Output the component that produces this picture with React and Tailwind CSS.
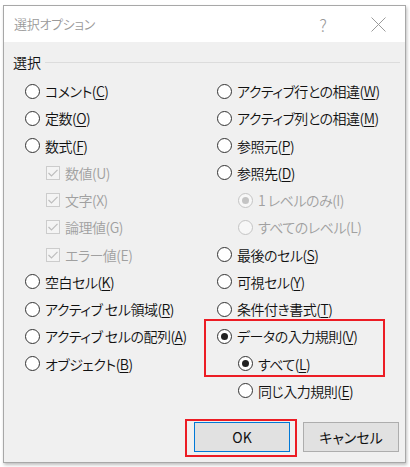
const FONT = { fontFamily: '"Noto Sans CJK JP", "Noto Sans", sans-serif' };

function Radio({ checked, disabled }) {
  return (
    <span
      className={
        'flex w-[15px] h-[15px] shrink-0 items-center justify-center rounded-full border ' +
        (disabled ? 'border-[#c4c4c4] bg-[#f7f7f7]' : 'border-[#333333] bg-white')
      }
    >
      {checked && (
        <span className={'w-[7px] h-[7px] rounded-full ' + (disabled ? 'bg-[#c4c4c4]' : 'bg-[#222222]')} />
      )}
    </span>
  );
}

function Check() {
  return (
    <span className="flex w-[14px] h-[14px] shrink-0 items-center justify-center border border-[#cccccc] bg-[#f4f4f4]">
      <svg width="12" height="12" viewBox="0 0 12 12" fill="none" stroke="#bdbdbd" strokeWidth="1.2">
        <path d="M1.5 6 L4.5 9 L10.5 2.8" />
      </svg>
    </span>
  );
}

// one row: control + label with access key underlined
function Option({ label, k, type = 'radio', checked, disabled, indent }) {
  return (
    <div className={'flex h-[27.25px] items-center ' + (indent ? 'pl-[21px]' : '')}>
      {type === 'check' ? <Check /> : <Radio checked={checked} disabled={disabled} />}
      <span
        className={'ml-[5px] text-[14px] font-[350] tracking-[-0.5px] leading-none whitespace-nowrap [font-feature-settings:"palt"] ' + (disabled ? 'text-[#a0a0a0]' : 'text-[#111111]')}
      >
        {label}(<span className={disabled ? '' : 'underline underline-offset-2'}>{k}</span>)
      </span>
    </div>
  );
}

export default function App() {
  return (
    <div className="w-[410px] h-[467px] bg-white pl-[3px] pt-[5px] overflow-hidden" style={FONT}>
      {/* dialog */}
      <div className="relative flex flex-col w-[403px] h-[458px] border border-[#a8a8a8] bg-[#f0f0f0] shadow-[1px_2px_3px_rgba(0,0,0,0.25)]">
        {/* title bar */}
        <div className="flex items-center h-[36px] bg-white pl-[10px] shrink-0">
          <span className="text-[13px] font-[350] tracking-[-0.3px] text-[#9a9a9a] [font-feature-settings:'palt']">選択オプション</span>
          <span className="ml-auto text-[17px] font-light text-[#9a9a9a] leading-none">?</span>
          <svg className="ml-[44px] mr-[19px]" width="15" height="15" viewBox="0 0 15 15" stroke="#9a9a9a" strokeWidth="1">
            <path d="M0.5 0.5 L14.5 14.5 M14.5 0.5 L0.5 14.5" />
          </svg>
        </div>

        {/* group header */}
        <div className="flex items-center h-[20px] mt-[10px] pl-[9px] pr-[5px]">
          <span className="text-[14px] font-[350] text-[#111111]">選択</span>
          <span className="flex-1 h-px bg-[#dcdcdc] ml-[4px]" />
        </div>

        {/* options */}
        <div className="flex mt-[5.4px] pl-[21px]">
          <div className="flex flex-col w-[192px]">
            <Option label="コメント" k="C" />
            <Option label="定数" k="O" />
            <Option label="数式" k="F" />
            <Option label="数値" k="U" type="check" disabled indent />
            <Option label="文字" k="X" type="check" disabled indent />
            <Option label="論理値" k="G" type="check" disabled indent />
            <Option label="エラー値" k="E" type="check" disabled indent />
            <Option label="空白セル" k="K" />
            <Option label="アクティブ セル領域" k="R" />
            <Option label="アクティブ セルの配列" k="A" />
            <Option label="オブジェクト" k="B" />
          </div>
          <div className="flex flex-col">
            <Option label="アクティブ行との相違" k="W" />
            <Option label="アクティブ列との相違" k="M" />
            <Option label="参照元" k="P" />
            <Option label="参照先" k="D" />
            <Option label="1 レベルのみ" k="I" checked disabled indent />
            <Option label="すべてのレベル" k="L" disabled indent />
            <Option label="最後のセル" k="S" />
            <Option label="可視セル" k="Y" />
            <Option label="条件付き書式" k="T" />
            <Option label="データの入力規則" k="V" checked />
            <Option label="すべて" k="L" checked indent />
            <Option label="同じ入力規則" k="E" indent />
          </div>
        </div>

        {/* buttons */}
        <div className="flex justify-end gap-[13px] mt-[18px] pr-[6px]">
          <button className="w-[96px] h-[30px] border border-[#0078d7] bg-[#e1e1e1] text-[14px] text-[#111111]">OK</button>
          <button className="w-[96px] h-[30px] border border-[#adadad] bg-[#e1e1e1] text-[14px] text-[#111111] [font-feature-settings:'palt']">キャンセル</button>
        </div>

        {/* red annotation boxes */}
        <div className="absolute left-[200px] top-[313px] w-[181px] h-[58px] border-2 border-[#ec1c24]" />
        <div className="absolute left-[181px] top-[413px] w-[112px] h-[38px] border-2 border-[#ec1c24]" />
      </div>
    </div>
  );
}
